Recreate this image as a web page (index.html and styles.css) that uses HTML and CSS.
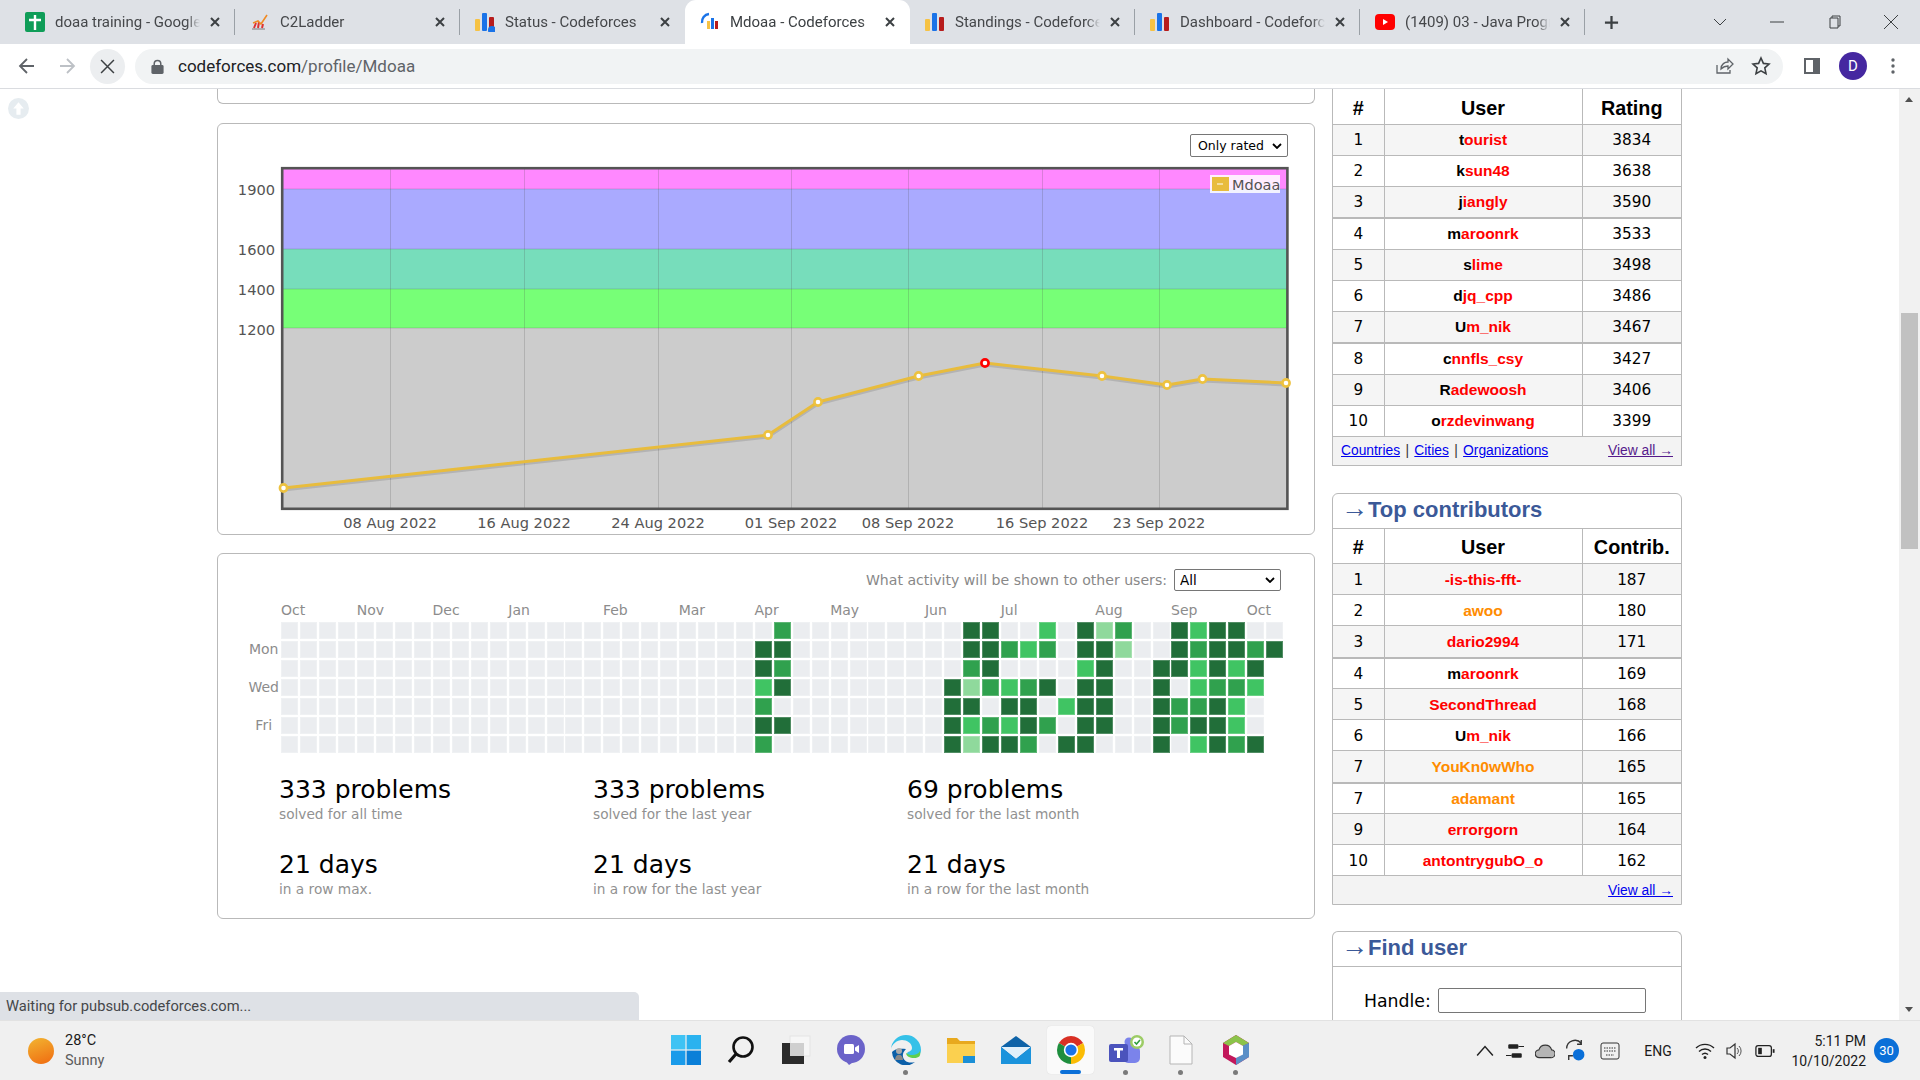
FILE: index.html
```html
<!DOCTYPE html>
<html lang="en">
<head>
<meta charset="utf-8">
<title>Mdoaa - Codeforces</title>
<link rel="stylesheet" href="styles.css">
<script src="app.js" defer></script>
</head>
<body>
<div class="tabs">
  <div class="tab sep"><svg class="ico" viewBox="0 0 20 20"><rect width="20" height="20" rx="2" fill="#0f9d58"/><path d="M10 3v15M4 8h12" stroke="#fff" stroke-width="2.4"/></svg><span class="t">doaa training - Google Sheets</span><svg class="x" viewBox="0 0 10 10"><path d="M1 1l8 8M9 1l-8 8"/></svg></div>
  <div class="tab sep"><svg class="ico" viewBox="0 0 20 20"><path d="M2 17h13" stroke="#999" stroke-width="1.4"/><path d="M4 16l2-5M8 16l1-6M12 16l1-4" stroke="#d33" stroke-width="2"/><path d="M3 11l5-2 3 3 6-9" fill="none" stroke="#f08a24" stroke-width="1.6"/></svg><span class="t">C2Ladder</span><svg class="x" viewBox="0 0 10 10"><path d="M1 1l8 8M9 1l-8 8"/></svg></div>
  <div class="tab"><svg class="ico" viewBox="0 0 20 20"><rect x="0" y="7" width="5" height="12" rx="1" fill="#f6c244"/><rect x="7" y="1" width="5" height="18" rx="1" fill="#1a73e8"/><rect x="14" y="5" width="5" height="14" rx="1" fill="#b71c1c"/><circle cx="17" cy="18" r="4" fill="#1a73e8"/></svg><span class="t">Status - Codeforces</span><svg class="x" viewBox="0 0 10 10"><path d="M1 1l8 8M9 1l-8 8"/></svg></div>
  <div class="tab on"><svg class="ico" viewBox="0 0 20 20"><path d="M2 11A8 8 0 0 1 9 2" fill="none" stroke="#1a73e8" stroke-width="2.4"/><rect x="7" y="9" width="3" height="8" fill="#f6c244"/><rect x="11" y="6" width="3" height="11" fill="#1a73e8"/><rect x="15" y="9" width="3" height="8" fill="#b71c1c"/></svg><span class="t">Mdoaa - Codeforces</span><svg class="x" viewBox="0 0 10 10"><path d="M1 1l8 8M9 1l-8 8"/></svg></div>
  <div class="tab sep"><svg class="ico" viewBox="0 0 20 20"><rect x="0" y="7" width="5" height="12" rx="1" fill="#f6c244"/><rect x="7" y="1" width="5" height="18" rx="1" fill="#1a73e8"/><rect x="14" y="5" width="5" height="14" rx="1" fill="#b71c1c"/></svg><span class="t">Standings - Codeforces</span><svg class="x" viewBox="0 0 10 10"><path d="M1 1l8 8M9 1l-8 8"/></svg></div>
  <div class="tab sep"><svg class="ico" viewBox="0 0 20 20"><rect x="0" y="7" width="5" height="12" rx="1" fill="#f6c244"/><rect x="7" y="1" width="5" height="18" rx="1" fill="#1a73e8"/><rect x="14" y="5" width="5" height="14" rx="1" fill="#b71c1c"/></svg><span class="t">Dashboard - Codeforces</span><svg class="x" viewBox="0 0 10 10"><path d="M1 1l8 8M9 1l-8 8"/></svg></div>
  <div class="tab sep"><svg class="ico" viewBox="0 0 20 20"><rect y="2" width="20" height="16" rx="4" fill="#f00"/><path d="M8 7l5 3-5 3z" fill="#fff"/></svg><span class="t">(1409) 03 - Java Programming</span><svg class="x" viewBox="0 0 10 10"><path d="M1 1l8 8M9 1l-8 8"/></svg></div>
  <svg class="plus" viewBox="0 0 16 16"><path d="M8 1v14M1 8h14"/></svg>
  <div class="win">
    <svg viewBox="0 0 14 14"><path d="M1 4l6 6 6-6"/></svg>
    <svg viewBox="0 0 14 14"><path d="M0 7h14"/></svg>
    <svg viewBox="0 0 14 14"><path d="M3 3h8v10H3zM5 3V1h8v10h-2"/></svg>
    <svg viewBox="0 0 14 14"><path d="M0 0l14 14M14 0L0 14"/></svg>
  </div>
</div>

<div class="toolbar">
  <svg class="nav" viewBox="0 0 20 20"><path d="M17 10H4M10 3l-7 7 7 7" stroke="#5f6368"/></svg>
  <svg class="nav" viewBox="0 0 20 20"><path d="M3 10h13M10 3l7 7-7 7" stroke="#bdc1c6"/></svg>
  <span class="stop"><svg viewBox="0 0 14 14"><path d="M1 1l12 12M13 1L1 13"/></svg></span>
  <div class="omni">
    <svg class="lock" viewBox="0 0 13 16"><path d="M3 7V5a3.5 3.5 0 0 1 7 0v2" fill="none" stroke="#5f6368" stroke-width="1.6"/><rect y="6.5" width="13" height="9.5" rx="1.5" fill="#5f6368"/></svg>
    <span class="url">codeforces.com<span class="path">/profile/Mdoaa</span></span>
    <svg class="omni-ico" viewBox="0 0 20 20"><path d="M3 9v8h13v-3M7 13c0-5 4-7 7-7V3l5 5-5 5v-3c-3 0-5 1-7 3z" fill="none" stroke="#5f6368" stroke-width="1.3"/></svg>
    <svg class="omni-ico" viewBox="0 0 20 20"><path d="M10 2l2.4 5.4 5.6.6-4.2 3.9 1.2 5.8L10 14.8l-5 2.9 1.2-5.8L2 8l5.6-.6z" fill="none" stroke="#3c4043" stroke-width="1.6"/></svg>
  </div>
  <svg class="panel-ico" viewBox="0 0 18 18"><rect x="1" y="1" width="16" height="16" fill="#5f6368"/><rect x="3" y="3" width="7" height="12" fill="#fff"/></svg>
  <span class="avatar">D</span>
  <svg class="dots" viewBox="0 0 4 18"><circle cx="2" cy="3" r="1.7"/><circle cx="2" cy="9" r="1.7"/><circle cx="2" cy="15" r="1.7"/></svg>
</div>

<div class="page">
  <span class="to-top"><svg viewBox="0 0 20 20"><path d="M10 4l-5 6h3v6h4v-6h3z" fill="#fff"/></svg></span>
  <main class="main">
    <div class="stub"></div>
    <section class="card chart-card">
      <div class="chart-head"><select class="sel sel-rated"><option>Only rated</option></select></div>
      <svg class="chart" viewBox="218 160 1096 373">
        <rect class="b-grey" x="283" y="328" width="1005" height="181"/>
        <rect class="b-green" x="283" y="289" width="1005" height="39"/>
        <rect class="b-teal" x="283" y="249" width="1005" height="40"/>
        <rect class="b-blue" x="283" y="189" width="1005" height="60"/>
        <rect class="b-pink" x="283" y="168" width="1005" height="21"/>
        <path class="grid-l" d="M390.5 168v341M524.5 168v341M658.5 168v341M791.5 168v341M908.5 168v341M1042.5 168v341M1159.5 168v341M283 189h1005M283 249h1005M283 289h1005M283 328h1005"/>
        <rect class="frame" x="282.2" y="168.2" width="1005.2" height="340.6"/>
        <polyline class="shadow" points="283.5,490 768,437 818,404 918.6,378 985,365 1102,378 1167,387 1202.5,381 1286,385"/>
        <polyline class="line" points="283.5,488 768,435 818,402 918.6,376 985,363 1102,376 1167,385 1202.5,379 1286,383"/>
        <g class="pts">
          <circle cx="283.5" cy="488" r="3.6"/><circle cx="768" cy="435" r="3.6"/><circle cx="818" cy="402" r="3.6"/><circle cx="918.6" cy="376" r="3.6"/><circle class="max" cx="985" cy="363" r="3.6"/><circle cx="1102" cy="376" r="3.6"/><circle cx="1167" cy="385" r="3.6"/><circle cx="1202.5" cy="379" r="3.6"/><circle cx="1286" cy="383" r="3.6"/>
        </g>
        <g class="y-l"><text x="275" y="195">1900</text><text x="275" y="255">1600</text><text x="275" y="295">1400</text><text x="275" y="335">1200</text></g>
        <g class="x-l"><text x="390" y="528">08 Aug 2022</text><text x="524" y="528">16 Aug 2022</text><text x="658" y="528">24 Aug 2022</text><text x="791" y="528">01 Sep 2022</text><text x="908" y="528">08 Sep 2022</text><text x="1042" y="528">16 Sep 2022</text><text x="1159" y="528">23 Sep 2022</text></g>
        <rect class="leg-bg" x="1210" y="175" width="70" height="18"/>
        <rect class="leg-sw" x="1212" y="177" width="17" height="14"/>
        <path class="leg-m" d="M1217 184h6"/>
        <text class="leg-t" x="1232" y="190">Mdoaa</text>
      </svg>
    </section>
    <section class="card act-card">
      <div class="act-head"><span>What activity will be shown to other users:</span><select class="sel sel-all"><option>All</option></select></div>
      <div class="months">
        <span class="s4">Oct</span><span class="s4">Nov</span><span class="s4">Dec</span><span class="s5">Jan</span><span class="s4">Feb</span><span class="s4">Mar</span><span class="s4">Apr</span><span class="s5">May</span><span class="s4">Jun</span><span class="s5">Jul</span><span class="s4">Aug</span><span class="s4">Sep</span><span class="s2">Oct</span>
      </div>
      <div class="cal">
        <div class="days"><span></span><span>Mon</span><span></span><span>Wed</span><span></span><span>Fri</span><span></span></div>
        <div class="cells" id="cells"></div>
      </div>
      <div class="stats">
        <div><b>333 problems</b><small>solved for all time</small></div>
        <div><b>333 problems</b><small>solved for the last year</small></div>
        <div><b>69 problems</b><small>solved for the last month</small></div>
        <div><b>21 days</b><small>in a row max.</small></div>
        <div><b>21 days</b><small>in a row for the last year</small></div>
        <div><b>21 days</b><small>in a row for the last month</small></div>
      </div>
    </section>
  </main>
  <aside class="side">
    <div class="box no-top">
      <table class="rank">
        <tr><th class="c1">#</th><th class="c2">User</th><th class="c3">Rating</th></tr>
        <tr class="odd"><td>1</td><td class="u"><i>t</i>ourist</td><td>3834</td></tr>
        <tr><td>2</td><td class="u"><i>k</i>sun48</td><td>3638</td></tr>
        <tr class="odd thick"><td>3</td><td class="u"><i>j</i>iangly</td><td>3590</td></tr>
        <tr><td>4</td><td class="u"><i>m</i>aroonrk</td><td>3533</td></tr>
        <tr class="odd"><td>5</td><td class="u"><i>s</i>lime</td><td>3498</td></tr>
        <tr><td>6</td><td class="u"><i>d</i>jq_cpp</td><td>3486</td></tr>
        <tr class="odd thick"><td>7</td><td class="u"><i>U</i>m_nik</td><td>3467</td></tr>
        <tr><td>8</td><td class="u"><i>c</i>nnfls_csy</td><td>3427</td></tr>
        <tr class="odd"><td>9</td><td class="u"><i>R</i>adewoosh</td><td>3406</td></tr>
        <tr><td>10</td><td class="u"><i>o</i>rzdevinwang</td><td>3399</td></tr>
      </table>
      <div class="foot"><span class="foot-l"><a href="#">Countries</a> | <a href="#">Cities</a> | <a href="#">Organizations</a></span><a href="#" class="seen">View all →</a></div>
    </div>
    <div class="box">
      <div class="cap"><span class="arr">→</span>Top contributors</div>
      <table class="rank">
        <tr><th class="c1">#</th><th class="c2">User</th><th class="c3">Contrib.</th></tr>
        <tr class="odd"><td>1</td><td class="u">-is-this-fft-</td><td>187</td></tr>
        <tr><td>2</td><td class="u org">awoo</td><td>180</td></tr>
        <tr class="odd thick"><td>3</td><td class="u">dario2994</td><td>171</td></tr>
        <tr><td>4</td><td class="u"><i>m</i>aroonrk</td><td>169</td></tr>
        <tr class="odd"><td>5</td><td class="u">SecondThread</td><td>168</td></tr>
        <tr><td>6</td><td class="u"><i>U</i>m_nik</td><td>166</td></tr>
        <tr class="odd thick"><td>7</td><td class="u org">YouKn0wWho</td><td>165</td></tr>
        <tr><td>7</td><td class="u org">adamant</td><td>165</td></tr>
        <tr class="odd"><td>9</td><td class="u">errorgorn</td><td>164</td></tr>
        <tr><td>10</td><td class="u">antontrygubO_o</td><td>162</td></tr>
      </table>
      <div class="foot foot-end"><a href="#">View all →</a></div>
    </div>
    <div class="box find">
      <div class="cap"><span class="arr">→</span>Find user</div>
      <div class="find-row"><label for="h">Handle:</label><input id="h" type="text"></div>
    </div>
  </aside>
  <div class="scroll"><span class="up"></span><span class="thumb"></span><span class="down"></span></div>
  <div class="bubble">Waiting for pubsub.codeforces.com...</div>
</div>

<div class="taskbar">
  <div class="weather"><span class="sun"></span><div class="wt"><span>28°C</span><span class="sunny">Sunny</span></div></div>
  <div class="apps">
    <span class="app"><svg viewBox="0 0 30 30"><path d="M0 0h14.4v14.4H0z" fill="#3ec3f4"/><path d="M15.6 0H30v14.4H15.6z" fill="#2ab2ef"/><path d="M0 15.6h14.4V30H0z" fill="#1a9bea"/><path d="M15.6 15.6H30V30H15.6z" fill="#0a7fd8"/></svg></span>
    <span class="app"><svg viewBox="0 0 30 30"><circle cx="17" cy="12" r="9.5" fill="none" stroke="#111" stroke-width="2.6"/><path d="M10 19l-7 8" stroke="#111" stroke-width="3.2"/></svg></span>
    <span class="app"><svg viewBox="0 0 30 30"><rect x="9" y="1" width="20" height="20" fill="#f6f6f6" stroke="#e4e4e4"/><rect x="1" y="8" width="22" height="21" fill="#2b2b2b"/><rect x="9" y="8" width="14" height="13" fill="#cfcfcf"/></svg></span>
    <span class="app"><svg viewBox="0 0 30 30"><circle cx="15" cy="14" r="14" fill="#6b63c9"/><path d="M8 24l5 6 6-4z" fill="#6b63c9"/><rect x="8" y="9" width="10" height="10" rx="1.5" fill="#fff"/><path d="M19 12.500l4-2.500v8l-4-2.500z" fill="#fff"/></svg></span>
    <span class="app dot"><svg viewBox="0 0 30 30"><path d="M15 0a15 15 0 0 1 15 15c0 5-4 7-8 7-3 0-6-1-6-3 0-3 5-2 5-6 0-5-5-8-10-8S1 9 0 14A15 15 0 0 1 15 0z" fill="#35c1e8"/><path d="M29 16c1 5-1 7-6 7-4 0-8-2-8-5 3 3 12 3 14-2z" fill="#5fce4e"/><path d="M1 17a14 14 0 0 0 23 10c-8 2-13-2-12-8 .3-2 2-4 3-5C9 13 3 14 1 17z" fill="#0b5fa8"/><circle cx="8" cy="16" r="3" fill="#aaa"/><path d="M4 25c0-7 8-7 8 0z" fill="#888"/></svg></span>
    <span class="app"><svg viewBox="0 0 30 30"><path d="M1 3h10l3 3h15v5H1z" fill="#e8a91e"/><rect x="1" y="9" width="28" height="19" fill="#fbd04f"/><rect x="17" y="21" width="12" height="7" fill="#1b8fd6"/></svg></span>
    <span class="app"><svg viewBox="0 0 30 30"><path d="M15 1L0 12v17h30V12z" fill="#0e63a8"/><path d="M0 12h30L15 24z" fill="#e2f0fa"/><path d="M0 12l15 12 15-12v17H0z" fill="#1b93dc"/></svg></span>
    <span class="app active"><svg viewBox="0 0 30 30"><path d="M15 15L2.88 8A14 14 0 0 1 27.12 8z" fill="#d93025"/><path d="M15 15L27.12 8A14 14 0 0 1 15 29z" fill="#fbbc04"/><path d="M15 15L15 29A14 14 0 0 1 2.88 8z" fill="#1e8e3e"/><circle cx="15" cy="15" r="7.2" fill="#fff"/><circle cx="15" cy="15" r="5.6" fill="#1a73e8"/></svg></span>
    <span class="app dot"><svg viewBox="0 0 36 30"><circle cx="21" cy="7" r="4.500" fill="#7b83eb"/><rect x="15" y="11" width="17" height="17" rx="5" fill="#7b83eb"/><rect x="1" y="9" width="19" height="18" rx="2" fill="#4b53bc"/><path d="M6 13h9v2.400h-3V23H9v-7.600H6z" fill="#fff"/><circle cx="29" cy="7" r="7" fill="#9ccc65"/><circle cx="29" cy="7" r="4.500" fill="#fff"/><path d="M26.500 7l2 2 3.500-4" fill="none" stroke="#2e9e3e" stroke-width="1.600"/></svg></span>
    <span class="app dot"><svg viewBox="0 0 30 30"><path d="M4 1h14l8 8v20H4z" fill="#fbfbfb" stroke="#b5b5b5"/><path d="M18 1v8h8" fill="none" stroke="#b5b5b5"/></svg></span>
    <span class="app dot"><svg viewBox="0 0 30 30"><path d="M15 0l13 8v14l-13 8-13-8V8z" fill="#c2185b"/><path d="M15 0l13 8-6 3-7-4-7 4-6-3z" fill="#8bc34a"/><path d="M28 8v14l-13 8v-7l6-3.500V11z" fill="#5b8fc7"/><path d="M15 7l7 4v8.500L15 23l-7-3.500V11z" fill="#fff"/></svg></span>
  </div>
  <div class="tray">
    <span class="ti w30"><svg viewBox="0 0 16 16"><path d="M1 12l7-8 7 8" fill="none" stroke="#222" stroke-width="1.3"/></svg></span>
    <span class="ti w30"><svg viewBox="0 0 16 16"><rect x="2" y="2" width="9" height="4" rx="1" fill="#222"/><rect x="5" y="10" width="9" height="4" rx="1" fill="#222"/><path d="M11 4h5M0 12h5" stroke="#222"/></svg></span>
    <span class="ti w30"><svg viewBox="0 0 18 16"><path d="M4 14a3.500 3.500 0 0 1-.5-7A6 6 0 0 1 15 7a3.500 3.500 0 0 1-1 7z" fill="#b5b5b5" stroke="#333"/></svg></span>
    <span class="ti w30 sync"><svg viewBox="0 0 20 22"><path d="M2 9a8 8 0 0 1 14-5M16 1v4h-4M4 20v-4h4" fill="none" stroke="#333" stroke-width="1.300"/><circle cx="13.500" cy="15" r="5.500" fill="#0a6fd8"/></svg></span>
    <span class="ti w40"><svg viewBox="0 0 20 18"><rect x="1" y="1" width="18" height="16" rx="2" fill="none" stroke="#333"/><path d="M4 6h12M4 9h12M6 13h8" stroke="#333" stroke-dasharray="1.500 1"/></svg></span>
    <span class="eng">ENG</span>
    <span class="ti w38"><svg viewBox="0 0 20 18"><path d="M1 6a13 13 0 0 1 18 0M4 9.500a8.500 8.500 0 0 1 12 0M7 12.500a4.500 4.500 0 0 1 6 0" fill="none" stroke="#222" stroke-width="1.400"/><circle cx="10" cy="15.500" r="1.500" fill="#222"/></svg></span>
    <span class="ti w20"><svg viewBox="0 0 18 18"><path d="M2 6h3l5-4v14l-5-4H2z" fill="none" stroke="#333" stroke-width="1.200"/><path d="M12 6a4 4 0 0 1 0 6M14 4a7 7 0 0 1 0 10" fill="none" stroke="#555"/></svg></span>
    <span class="ti w42"><svg viewBox="0 0 22 16"><rect x="1" y="2" width="17" height="12" rx="2.500" fill="none" stroke="#222" stroke-width="1.400"/><rect x="3.500" y="4.500" width="4" height="7" fill="#222"/><rect x="19.500" y="6" width="2" height="4" fill="#222"/></svg></span>
    <div class="clock"><span>5:11 PM</span><span>10/10/2022</span></div>
    <span class="badge">30</span>
  </div>
</div>
</body>
</html>
```
FILE: styles.css
```css
* { box-sizing: border-box; }
html, body { margin: 0; height: 100%; }
body { display: flex; flex-direction: column; height: 1080px; overflow: hidden; background: #fff; font-family: "DejaVu Sans", sans-serif; color: #000; }

/* browser chrome */
.tabs { flex: none; display: flex; align-items: center; height: 44px; padding-left: 10px; background: #dee1e6; }
.tab { position: relative; display: flex; align-items: center; width: 225px; height: 44px; padding-left: 15px; padding-bottom: 1px; font: 15px Roboto, sans-serif; color: #45474a; }
.tab.on { background: #fff; border-radius: 11px 11px 0 0; color: #3c4043; }
.tab.sep::after { content: ""; position: absolute; right: 0; top: 9px; width: 1px; height: 26px; background: #9aa0a6; }
.ico { flex: none; width: 20px; height: 20px; margin-right: 10px; }
.t { flex: none; width: 145px; margin-right: 5px; overflow: hidden; white-space: nowrap; -webkit-mask-image: linear-gradient(to right, #000 91%, transparent); mask-image: linear-gradient(to right, #000 91%, transparent); }
.x { flex: none; width: 10px; height: 10px; margin-left: 5px; fill: none; stroke: #3c4043; stroke-width: 2; }
.plus { width: 15px; height: 15px; margin-left: 19px; fill: none; stroke: #3c4043; stroke-width: 2.4; }
.win { display: flex; margin-left: auto; padding-right: 1px; }
.win svg { width: 14px; height: 14px; margin: 0 21.5px; fill: none; stroke: #3c4043; stroke-width: 1; }

.toolbar { flex: none; display: flex; align-items: center; height: 44px; padding: 0 13px 0 7px; background: #fff; }
.nav { flex: none; width: 20px; height: 20px; margin: 0 10px; fill: none; stroke-width: 1.800; }
.stop { flex: none; display: flex; align-items: center; justify-content: center; width: 35px; height: 35px; margin-left: 3px; border-radius: 50%; background: #eceef0; }
.stop svg { width: 15px; height: 15px; fill: none; stroke: #3c4043; stroke-width: 1.400; }
.omni { flex: 1; display: flex; align-items: center; height: 35px; margin: 0 15px 0 10px; padding: 0 12px 0 16px; border-radius: 18px; background: #f1f3f4; }
.lock { flex: none; width: 13px; height: 15px; margin-right: 14px; }
.url { flex: 1; padding-bottom: 1px; font: 17px Roboto, sans-serif; color: #202124; }
.path { color: #5f6368; }
.omni-ico { flex: none; width: 20px; height: 20px; margin-left: 17px; }
.panel-ico { flex: none; width: 18px; height: 18px; margin: 0 18px 0 5px; }
.avatar { flex: none; display: flex; align-items: center; justify-content: center; width: 28px; height: 28px; border-radius: 50%; background: #4527a0; color: #fff; font: 15px Roboto, sans-serif; }
.dots { flex: none; width: 4px; height: 18px; margin: 0 12px 0 24px; fill: #5f6368; }

/* page */
.page { flex: none; position: relative; display: flex; height: 932px; padding-left: 217px; overflow: hidden; border-top: 1px solid #dadce0; }
.to-top { position: absolute; left: 8px; top: 9px; width: 21px; height: 21px; border-radius: 50%; background: #e6ecf0; }
.to-top svg { display: block; width: 21px; height: 21px; }
.main { flex: none; width: 1098px; }
.stub { height: 15px; border: 1px solid #b9b9b9; border-top: 0; border-radius: 0 0 6px 6px; }
.card { border: 1px solid #b9b9b9; border-radius: 6px; }
.chart-card { height: 412px; margin-top: 19px; }
.chart-head { display: flex; justify-content: flex-end; height: 36px; padding: 10px 26px 0 0; }
.sel { appearance: none; -webkit-appearance: none; height: 23px; border: 1px solid #767676; border-radius: 2px; background: #fff url("data:image/svg+xml,%3Csvg xmlns='http://www.w3.org/2000/svg' viewBox='0 0 10 6'%3E%3Cpath d='M1 1l4 4 4-4' fill='none' stroke='%23000' stroke-width='1.800'/%3E%3C/svg%3E") no-repeat right 5px center / 10px 6px; font: 12.500px "DejaVu Sans", sans-serif; color: #000; }
.sel-rated { width: 98px; padding-left: 7px; }
.sel-all { width: 107px; margin-left: 7px; height: 22px; padding-left: 5px; font-size: 13.500px; }
.chart { display: block; width: 1096px; height: 373px; }
.b-grey { fill: #ccc; } .b-green { fill: #7f7; } .b-teal { fill: #7db; } .b-blue { fill: #aaf; } .b-pink { fill: #f8f; }
.grid-l { fill: none; stroke: #545454; stroke-opacity: .22; stroke-width: 1; }
.frame { fill: none; stroke: #545454; stroke-width: 2.600; }
.line, .shadow { fill: none; stroke-width: 3; stroke-linejoin: round; }
.line { stroke: #e8bc3d; }
.shadow { stroke: rgba(0,0,0,.12); }
.pts circle { fill: #fff; stroke: #edc240; stroke-width: 2.600; }
.pts .max { stroke: #f00; }
.y-l text, .x-l text { font-size: 14.600px; fill: #545454; }
.y-l text { text-anchor: end; }
.x-l text { text-anchor: middle; }
.leg-bg { fill: #fff; fill-opacity: .85; }
.leg-sw { fill: #e8bc3d; }
.leg-m { stroke: #fff; stroke-width: 1; }
.leg-t { font-size: 14.500px; fill: #545454; }

.act-card { height: 366px; margin-top: 18px; padding-top: 15px; }
.act-head { display: flex; justify-content: flex-end; align-items: center; height: 22px; padding-right: 33px; font-size: 14.100px; color: #888; }
.months { display: grid; grid-template-columns: repeat(13, auto); justify-content: start; height: 20px; margin: 9px 0 0 63px; font-size: 14px; line-height: 20px; color: #8c8c8c; }
.s2 { width: 37.880px; } .s4 { width: 75.760px; } .s5 { width: 94.700px; }
.cal { display: flex; margin-top: 2px; }
.days { display: grid; flex: none; grid-template-rows: repeat(7, 19px); width: 63.400px; padding-left: 28px; font-size: 14px; line-height: 17px; text-align: center; color: #8c8c8c; }
.cells { display: grid; grid-auto-flow: column; grid-template-rows: repeat(7, 19px); grid-auto-columns: 18.940px; }
.cells i { display: block; width: 17px; height: 17px; background: #ebedf0; border: 1px solid rgba(255,255,255,.22); }
.cells .l1 { background: #8fd99c; } .cells .l2 { background: #40c463; } .cells .l3 { background: #30a14e; } .cells .l4 { background: #216e39; }
.cells .none { visibility: hidden; }
.stats { display: grid; grid-template-columns: repeat(3, 314px); row-gap: 26px; margin: 20px 0 0 61px; }
.stats b { display: block; font-weight: 400; font-size: 25px; line-height: 30px; }
.stats small { display: block; margin-top: -1px; font-size: 13.700px; line-height: 20px; color: #919191; }

/* sidebar */
.side { flex: none; width: 350px; margin-left: 17px; }
.box { margin-bottom: 27px; border: 1px solid #b9b9b9; border-radius: 6px 6px 0 0; }
.no-top { border-top: 0; border-radius: 0; margin-bottom: 28px; }
.box + .box { margin-top: -1px; }
.cap { height: 35px; padding: 2px 0 0 8px; border-bottom: 1px solid #b9b9b9; font: bold 22px/28px "Liberation Sans", sans-serif; color: #3b5998; }
.arr { display: inline-block; width: 27px; font-weight: 400; font-size: 27px; line-height: 24px; vertical-align: top; }
.rank { width: 348px; table-layout: fixed; border-collapse: collapse; }
.rank th { height: 35px; padding: 4px 0 0; font: bold 19.800px "Liberation Sans", sans-serif; border: 1px solid #b9b9b9; border-width: 0 0 1px 1px; }
.rank th:first-child, .rank td:first-child { border-left: 0; }
.c1 { width: 51px; } .c3 { width: 99px; }
.rank td { height: 31px; padding: 1px 0 0; text-align: center; font-size: 15.300px; border: 1px solid #b9b9b9; border-width: 0 0 1px 1px; }
.rank .odd td { background: #f5f5f5; }
.rank .thick td { height: 32px; border-bottom-width: 2px; }
.rank .u { font: bold 15.500px "Liberation Sans", sans-serif; color: #f00; }
.rank .org { color: #ff8c00; }
.u i { font-style: normal; color: #000; }
.foot { display: flex; justify-content: space-between; align-items: center; height: 28px; padding: 0 8px; background: #f3f3f3; font: 13.800px "Liberation Sans", sans-serif; color: #333; }
.foot-l { word-spacing: 1.500px; }
.foot-end { justify-content: flex-end; }
.foot a { color: #0000ee; }
.foot .seen { color: #551a8b; }
.find { height: 130px; margin-bottom: 0; border-bottom: 0; }
.find-row { display: flex; align-items: center; margin: 21px 0 0 31px; font-size: 17.300px; }
.find-row input { width: 208px; height: 25px; margin-left: 7px; border: 1px solid #767676; border-radius: 2px; background: #fff; }

.scroll { position: relative; flex: none; display: block; width: 21px; margin-left: auto; background: #f1f1f1; }
.thumb { position: absolute; left: 2px; right: 2px; top: 224px; height: 236px; background: #c1c1c1; }
.up, .down { position: absolute; left: 6px; width: 0; height: 0; border-left: 4.500px solid transparent; border-right: 4.500px solid transparent; }
.up { top: 8px; border-bottom: 5px solid #505050; }
.down { bottom: 8px; border-top: 5px solid #505050; }
.bubble { position: absolute; left: 0; bottom: 0; width: 639px; height: 28px; padding-left: 6px; border-top-right-radius: 5px; background: #dee1e6; font: 14.700px/28px Roboto, sans-serif; color: #45474a; }

/* taskbar */
.taskbar { flex: none; display: flex; align-items: center; height: 60px; background: #f0f0f0; border-top: 1px solid #e2e2e2; }
.weather { flex: none; display: flex; align-items: center; width: 658px; padding-left: 28px; }
.sun { width: 26px; height: 26px; border-radius: 50%; background: linear-gradient(160deg, #f2b531, #f06a10); }
.wt { display: flex; flex-direction: column; margin-left: 11px; font: 14.500px/20px Roboto, sans-serif; color: #1a1a1a; }
.sunny { color: #5c5c5c; }
.apps { flex: none; display: flex; margin-bottom: 2px; }
.app { position: relative; display: flex; align-items: center; justify-content: center; width: 55px; height: 48px; }
.app svg { height: 30px; max-width: 36px; }
.app.dot::after { content: ""; position: absolute; left: 25px; bottom: -1px; width: 5px; height: 5px; border-radius: 50%; background: #7a7a7a; }
.app.active::before { content: ""; position: absolute; left: 4px; right: 4px; top: 0; bottom: 0; border-radius: 4px; background: #fafafa; box-shadow: 0 0 1px rgba(0,0,0,.15); }
.app.active svg { position: relative; }
.app.active::after { content: ""; position: absolute; left: 17px; bottom: 0; width: 21px; height: 4px; border-radius: 2px; background: #0a6fd8; }
.tray { flex: none; display: flex; align-items: center; margin-left: auto; padding-right: 21px; }
.ti { display: flex; justify-content: center; }
.ti svg { height: 18px; width: 20px; }
.sync svg { height: 23px; width: 22px; }
.w30 { width: 30px; } .w40 { width: 40px; } .w38 { width: 38px; } .w20 { width: 20px; } .w42 { width: 42px; }
.eng { width: 56px; text-align: center; font: 14px Roboto, sans-serif; color: #1a1a1a; }
.clock { display: flex; flex-direction: column; align-items: flex-end; width: 82px; padding-right: 2px; font: 14px/20px Roboto, sans-serif; color: #1a1a1a; }
.badge { display: flex; align-items: center; justify-content: center; width: 25px; height: 25px; margin-left: 6px; border-radius: 50%; background: #0a6fd8; color: #fff; font: 13px Roboto, sans-serif; }
```
FILE: app.js
```js
// Submission calendar: one string per week, Sunday first. "-" means no cell.
var active = {
  25: "0442343", 26: "3434040",
  35: "0004444", 36: "4431421", 37: "4443034", 38: "0302424", 39: "0203443",
  40: "2304030", 41: "0000204", 42: "4424444", 43: "1444440", 44: "3100000",
  46: "0044444", 47: "4440330", 48: "2322342", 49: "4443444", 50: "4423223",
  51: "0342004", 52: "04-----"
};
var out = "";
for (var w = 0; w < 53; w++) {
  var col = active[w] || "0000000";
  for (var d = 0; d < 7; d++) {
    var v = col.charAt(d);
    out += v === "-" ? '<i class="none"></i>' : v === "0" ? "<i></i>" : '<i class="l' + v + '"></i>';
  }
}
document.getElementById("cells").innerHTML = out;
```
